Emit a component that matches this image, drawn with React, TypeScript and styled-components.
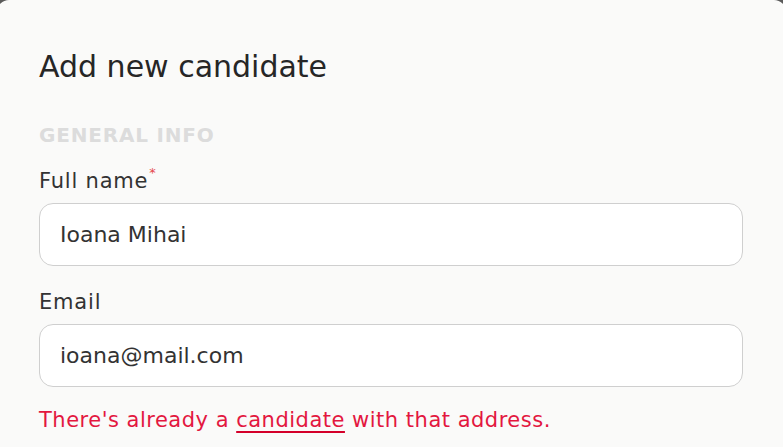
import React from "react";
import styled, { createGlobalStyle } from "styled-components";

const Global = createGlobalStyle`
  html, body { margin: 0; padding: 0; background: #5b5b5b; overflow: hidden; }
  body { font-family: "DejaVu Sans", sans-serif; }
  * { box-sizing: border-box; }
`;

const Backdrop = styled.div`
  width: 783px;
  height: 447px;
  overflow: hidden;
`;

const Dialog = styled.div`
  margin: 0 -3px;
  height: 470px;
  background: #fafaf9;
  border-radius: 12px 12px 0 0;
  padding: 48px 42px 0 42px;
  display: flex;
  flex-direction: column;
`;

const Title = styled.h2`
  margin: 0;
  font-size: 30px;
  font-weight: 400;
  color: #262626;
  line-height: 38px;
`;

const Section = styled.div`
  margin-top: 36px;
  font-size: 20px;
  font-weight: 700;
  color: #dcdcdc;
  line-height: 26px;
  letter-spacing: 0.8px;
`;

const Field = styled.div<{ $gap?: number }>`
  display: flex;
  flex-direction: column;
  margin-top: ${(p) => p.$gap ?? 0}px;
`;

const Label = styled.label`
  font-size: 21px;
  color: #333333;
  line-height: 28px;
  letter-spacing: 0.8px;
  margin-bottom: 8px;
`;

const Star = styled.sup`
  color: #e5484d;
  font-size: 13px;
  vertical-align: top;
  line-height: 12px;
  margin-left: 1px;
`;

const Input = styled.div`
  height: 63px;
  width: 704px;
  background: #ffffff;
  border: 1px solid #cfcfcf;
  border-radius: 14px;
  display: flex;
  align-items: center;
  padding: 0 20px;
  font-size: 22px;
  color: #333333;
`;

const ErrorText = styled.div`
  margin-top: 19px;
  font-size: 21px;
  letter-spacing: 0.5px;
  color: #e3173f;
  line-height: 28px;
`;

const ErrLink = styled.span`
  text-decoration: underline;
  text-decoration-color: #d4002a;
  text-underline-offset: 4px;
  text-decoration-thickness: 2px;
`;

export default function App() {
  return (
    <Backdrop>
      <Global />
      <Dialog>
        <Title>Add new candidate</Title>
        <Section>GENERAL INFO</Section>
        <Field $gap={19}>
          <Label>
            Full name<Star>*</Star>
          </Label>
          <Input>Ioana Mihai</Input>
        </Field>
        <Field $gap={22}>
          <Label>Email</Label>
          <Input>ioana@mail.com</Input>
        </Field>
        <ErrorText>
          There's already a <ErrLink>candidate</ErrLink> with that address.
        </ErrorText>
      </Dialog>
    </Backdrop>
  );
}
